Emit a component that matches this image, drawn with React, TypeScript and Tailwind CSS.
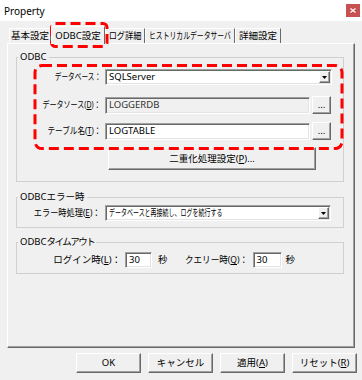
import type { ReactNode } from "react";

const sunken =
  "border border-t-[#a0a0a0] border-l-[#a0a0a0] border-r-white border-b-white shadow-[inset_1px_1px_0_#696969,inset_-1px_-1px_0_#e3e3e3]";
const raised =
  "border border-t-white border-l-white border-r-[#696969] border-b-[#696969] shadow-[inset_-1px_-1px_0_#a0a0a0]";

// Meiryo UI kana are much narrower than Noto CJK, so squeeze the kana-heavy strings
const TABS = [
  { label: "基本設定", w: "w-[42px]", sq: "" },
  { label: "ODBC設定", w: "w-[54px]", sq: "", active: true },
  { label: "ログ詳細", w: "w-[40px]", sq: "scale-x-[0.86]" },
  { label: "ヒストリカルデータサーバ", w: "w-[90px]", sq: "scale-x-[0.72]" },
  { label: "詳細設定", w: "w-[46px]", sq: "" }
];

function Mn({ pre, k, post = "" }: { pre: string; k: string; post?: string }) {
  return (
    <>
      {pre}(<u>{k}</u>){post}
    </>
  );
}

function Combo({ children, width }: { children: ReactNode; width: string }) {
  return (
    <div className={`flex h-[16px] items-center justify-between bg-white pl-[3px] pr-[1px] ${sunken} ${width}`}>
      {children}
      <span className={`flex h-[12px] w-[11px] shrink-0 items-center justify-center bg-[#f0f0f0] ${raised}`}>
        <svg width="5" height="3" viewBox="0 0 5 3">
          <path d="M0 0h5L2.5 3z" fill="#000" />
        </svg>
      </span>
    </div>
  );
}

function Field({ value, width, disabled }: { value: string; width: string; disabled?: boolean }) {
  return (
    <div
      className={`flex h-[17px] items-center pl-[3px] ${sunken} ${width} ${disabled ? "bg-[#f0f0f0] text-[#303030]" : "bg-white"}`}
    >
      {value}
    </div>
  );
}

function Btn({ children, className = "" }: { children: ReactNode; className?: string }) {
  return (
    <div className={`flex items-center justify-center whitespace-nowrap bg-[#f0f0f0] ${raised} ${className}`}>
      {children}
    </div>
  );
}

function Group({ title, className, children }: { title: ReactNode; className: string; children: ReactNode }) {
  return (
    <fieldset className={`w-[328px] border border-[#d0d0d0] ${className}`}>
      <legend className="ml-[1px] px-[2px] leading-[12px]">{title}</legend>
      {children}
    </fieldset>
  );
}

function Label({ children, sq, w = "w-[88px]" }: { children: ReactNode; sq: string; w?: string }) {
  return (
    <div className={`flex shrink-0 justify-end pr-[4px] ${w}`}>
      <span className={`inline-block shrink-0 origin-right whitespace-nowrap ${sq}`}>{children}</span>
    </div>
  );
}

export default function App() {
  return (
    <div className='relative flex h-[380px] w-[362px] flex-col overflow-hidden bg-[#f0f0f0] font-["Noto_Sans","Noto_Sans_CJK_JP",sans-serif] text-[9.5px] leading-none text-black'>
      <div className="flex h-[21px] items-center justify-between bg-white pl-[4px] pr-[2px]">
        <span className="text-[10px]">Property</span>
        <span className="flex h-[13px] w-[14px] items-center justify-center bg-[#c75050]">
          <svg width="6" height="5" viewBox="0 0 6 5">
            <path d="M0.5 0.5l5 4M5.5 0.5l-5 4" stroke="#fff" strokeWidth="1.2" />
          </svg>
        </span>
      </div>

      <div className="flex h-[22px] items-end pl-[9px] pt-[5px]">
        {TABS.map((t) => (
          <div
            key={t.label}
            className={`flex items-center justify-center border-l border-r border-t border-l-white border-r-[#696969] border-t-white ${t.w} ${
              t.active ? "relative z-10 -mb-[1px] h-[18px] bg-[#f0f0f0]" : "h-[15px]"
            }`}
          >
            <span className={`inline-block shrink-0 whitespace-nowrap ${t.sq}`}>{t.label}</span>
          </div>
        ))}
      </div>

      <div className={`mx-[7px] h-[305px] pl-[8px] ${raised}`}>
        <Group title="ODBC" className="mt-[7px] pb-[11px] pt-[5px]">
          <div className="flex h-[18px] items-center">
            <Label sq="scale-x-[0.7]">データベース：</Label>
            <Combo width="w-[227px]">
              <span>SQLServer</span>
            </Combo>
          </div>
          <div className="mt-[10px] flex h-[18px] items-center">
            <Label sq="scale-x-[0.74]">
              <Mn pre="データソース" k="D" post="：" />
            </Label>
            <Field value="LOGGERDB" width="w-[205px]" disabled />
            <Btn className="ml-[2px] h-[18px] w-[19px]">...</Btn>
          </div>
          <div className="mt-[8px] flex h-[18px] items-center">
            <Label sq="scale-x-[0.8]">
              <Mn pre="テーブル名" k="T" post="：" />
            </Label>
            <Field value="LOGTABLE" width="w-[205px]" />
            <Btn className="ml-[2px] h-[18px] w-[19px]">...</Btn>
          </div>
          <Btn className="ml-[91px] mt-[7px] h-[23px] w-[208px]">
            <Mn pre="二重化処理設定" k="P" post="..." />
          </Btn>
        </Group>

        <Group title="ODBCエラー時" className="mt-[9px] pb-[6px] pt-[2px]">
          <div className="flex h-[16px] items-center">
            <Label sq="scale-x-[0.86]">
              <Mn pre="エラー時処理" k="E" post="：" />
            </Label>
            <Combo width="w-[226px]">
              <span className="inline-block shrink-0 origin-left scale-x-[0.63] whitespace-nowrap">
                データベースと再接続し、ログを続行する
              </span>
            </Combo>
          </div>
        </Group>

        <Group
          title={
            <>
              ODBC<span className="tracking-[-1.5px]">タイムアウト</span>
            </>
          }
          className="mt-[8px] pb-[5px] pt-[4px]"
        >
          <div className="flex h-[16px] items-center">
            <Label sq="" w="w-[108px]">
              <Mn pre="ログイン時" k="L" post="：" />
            </Label>
            <div className={`flex h-[16px] w-[27px] items-center bg-white pl-[3px] ${sunken}`}>30</div>
            <span className="ml-[6px]">秒</span>
            <Label sq="scale-x-[0.9]" w="w-[85px]">
              <Mn pre="クエリー時" k="Q" post="：" />
            </Label>
            <div className={`flex h-[16px] w-[29px] items-center bg-white pl-[3px] ${sunken}`}>30</div>
            <span className="ml-[4px]">秒</span>
          </div>
        </Group>
      </div>

      <div className="flex justify-end gap-[7px] pr-[5px] pt-[5px]">
        <Btn className="h-[20px] w-[65px]">OK</Btn>
        <Btn className="h-[20px] w-[65px]">キャンセル</Btn>
        <Btn className="h-[20px] w-[65px]">
          <Mn pre="適用" k="A" />
        </Btn>
        <Btn className="h-[20px] w-[65px]">
          <Mn pre="リセット" k="R" />
        </Btn>
      </div>

      <svg className="pointer-events-none absolute left-0 top-0" width="362" height="380">
        <rect x="51.5" y="23.5" width="55.5" height="23" rx="4" fill="none" stroke="#ff0000" strokeWidth="3" strokeDasharray="10 5" />
        <rect x="35" y="65.5" width="307" height="83" rx="7" fill="none" stroke="#ff0000" strokeWidth="3" strokeDasharray="10 5" />
      </svg>
    </div>
  );
}
